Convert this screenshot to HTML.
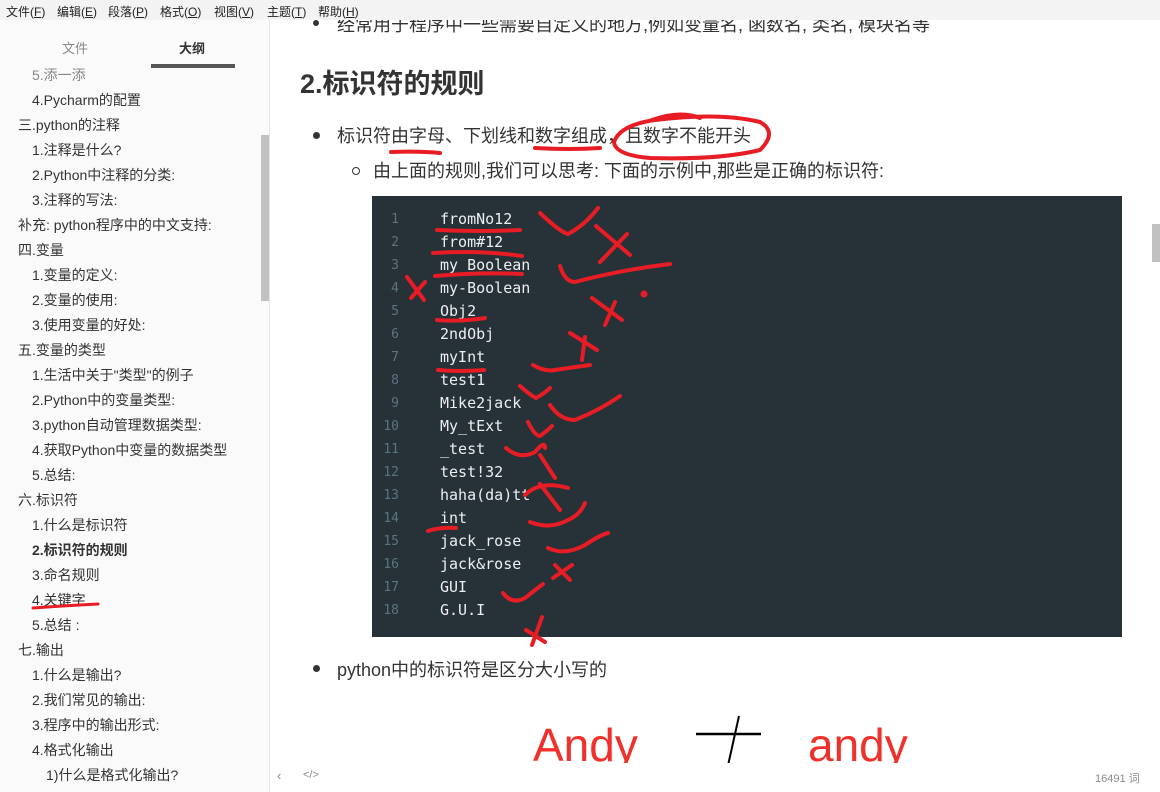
<!DOCTYPE html>
<html><head><meta charset="utf-8"><style>
*{margin:0;padding:0;box-sizing:border-box}
body{width:1160px;height:792px;overflow:hidden;background:#fff;font-family:"Liberation Sans","Noto Sans CJK SC",sans-serif;color:#333;position:relative}
.menu{position:absolute;left:0;top:0;width:1160px;height:20px;background:#f3f3f3;font-size:12px;color:#222}
.menu span{position:absolute;top:3px}
.side{position:absolute;left:0;top:20px;width:270px;height:772px;background:#fafafa;border-right:1px solid #e5e5e5;overflow:hidden}
.tab{position:absolute;top:18px;font-size:13px}
.side .it{position:absolute;font-size:14px;color:#333;white-space:nowrap}
.sb{position:absolute;left:261px;top:135px;width:8px;height:166px;background:#c1c1c1}
.main{position:absolute;left:271px;top:20px;width:889px;height:743px;overflow:hidden}
.code{position:absolute;left:101px;top:176px;width:750px;height:441px;background:#263238}
.ln{position:absolute;left:0;width:27px;text-align:right;color:#5c7480;font-family:"DejaVu Sans Mono","Liberation Mono",monospace;font-size:13px}
.cd{position:absolute;left:68px;color:#eceff1;font-family:"DejaVu Sans Mono","Liberation Mono",monospace;font-size:15px;white-space:pre}
.foot{position:absolute;left:271px;top:763px;width:889px;height:29px;background:#fff;font-size:11px;color:#888}
.t{position:absolute;font-size:18px;white-space:nowrap}
</style></head><body>
<div class="menu">
<span style="left:6px">文件(<u>F</u>)</span><span style="left:57px">编辑(<u>E</u>)</span><span style="left:108px">段落(<u>P</u>)</span><span style="left:160px">格式(<u>O</u>)</span><span style="left:214px">视图(<u>V</u>)</span><span style="left:267px">主题(<u>T</u>)</span><span style="left:318px">帮助(<u>H</u>)</span>
</div>
<div class="side">
<div class="it" style="left:32px;top:45px;color:#888">5.添一添</div>
<div class="tab" style="left:62px;color:#888;background:#fafafa">文件</div>
<div class="tab" style="left:179px;color:#333;font-weight:bold">大纲</div>
<div style="position:absolute;left:0;top:0;width:260px;height:44px;background:#fafafa;z-index:-1"></div>
<div style="position:absolute;left:151px;top:44px;width:84px;height:4px;background:#555"></div>
<div class="it" style="left:32px;top:70px">4.Pycharm的配置</div>
<div class="it" style="left:18px;top:95px">三.python的注释</div>
<div class="it" style="left:32px;top:120px">1.注释是什么?</div>
<div class="it" style="left:32px;top:145px">2.Python中注释的分类:</div>
<div class="it" style="left:32px;top:170px">3.注释的写法:</div>
<div class="it" style="left:18px;top:195px">补充: python程序中的中文支持:</div>
<div class="it" style="left:18px;top:220px">四.变量</div>
<div class="it" style="left:32px;top:245px">1.变量的定义:</div>
<div class="it" style="left:32px;top:270px">2.变量的使用:</div>
<div class="it" style="left:32px;top:295px">3.使用变量的好处:</div>
<div class="it" style="left:18px;top:320px">五.变量的类型</div>
<div class="it" style="left:32px;top:345px">1.生活中关于"类型"的例子</div>
<div class="it" style="left:32px;top:370px">2.Python中的变量类型:</div>
<div class="it" style="left:32px;top:395px">3.python自动管理数据类型:</div>
<div class="it" style="left:32px;top:420px">4.获取Python中变量的数据类型</div>
<div class="it" style="left:32px;top:445px">5.总结:</div>
<div class="it" style="left:18px;top:470px">六.标识符</div>
<div class="it" style="left:32px;top:495px">1.什么是标识符</div>
<div class="it" style="left:32px;top:520px;font-weight:bold">2.标识符的规则</div>
<div class="it" style="left:32px;top:545px">3.命名规则</div>
<div class="it" style="left:32px;top:570px">4.关键字</div>
<div class="it" style="left:32px;top:595px">5.总结 :</div>
<div class="it" style="left:18px;top:620px">七.输出</div>
<div class="it" style="left:32px;top:645px">1.什么是输出?</div>
<div class="it" style="left:32px;top:670px">2.我们常见的输出:</div>
<div class="it" style="left:32px;top:695px">3.程序中的输出形式:</div>
<div class="it" style="left:32px;top:720px">4.格式化输出</div>
<div class="it" style="left:46px;top:745px">1)什么是格式化输出?</div>
</div>
<div class="sb"></div>
<svg style="position:absolute;left:0;top:0" width="270" height="792"><path d="M33 608 Q60 606 98 604" stroke="#e81c24" stroke-width="3" fill="none" stroke-linecap="round"/></svg>
<div class="main">
<div style="position:absolute;left:42px;top:0px;width:6px;height:6px;border-radius:50%;background:#333"></div>
<div class="t" style="left:66px;top:-9px">经常用于程序中一些需要自定义的地方,例如变量名, 函数名, 类名, 模块名等</div>
<div style="position:absolute;left:29px;top:42px;font-size:27px;font-weight:bold;color:#333">2.标识符的规则</div>
<div style="position:absolute;left:42px;top:112px;width:7px;height:7px;border-radius:50%;background:#333"></div>
<div class="t" style="left:66px;top:102px">标识符由字母、下划线和数字组成，且数字不能开头</div>
<div style="position:absolute;left:81px;top:147px;width:8px;height:8px;border-radius:50%;border:1px solid #333"></div>
<div class="t" style="left:102px;top:137px">由上面的规则,我们可以思考: 下面的示例中,那些是正确的标识符:</div>
<div class="code">
<div class="ln" style="top:16px">1</div><div class="cd" style="top:14px">fromNo12</div>
<div class="ln" style="top:39px">2</div><div class="cd" style="top:37px">from#12</div>
<div class="ln" style="top:62px">3</div><div class="cd" style="top:60px">my_Boolean</div>
<div class="ln" style="top:85px">4</div><div class="cd" style="top:83px">my-Boolean</div>
<div class="ln" style="top:108px">5</div><div class="cd" style="top:106px">Obj2</div>
<div class="ln" style="top:131px">6</div><div class="cd" style="top:129px">2ndObj</div>
<div class="ln" style="top:154px">7</div><div class="cd" style="top:152px">myInt</div>
<div class="ln" style="top:177px">8</div><div class="cd" style="top:175px">test1</div>
<div class="ln" style="top:200px">9</div><div class="cd" style="top:198px">Mike2jack</div>
<div class="ln" style="top:223px">10</div><div class="cd" style="top:221px">My_tExt</div>
<div class="ln" style="top:246px">11</div><div class="cd" style="top:244px">_test</div>
<div class="ln" style="top:269px">12</div><div class="cd" style="top:267px">test!32</div>
<div class="ln" style="top:292px">13</div><div class="cd" style="top:290px">haha(da)tt</div>
<div class="ln" style="top:315px">14</div><div class="cd" style="top:313px">int</div>
<div class="ln" style="top:338px">15</div><div class="cd" style="top:336px">jack_rose</div>
<div class="ln" style="top:361px">16</div><div class="cd" style="top:359px">jack&amp;rose</div>
<div class="ln" style="top:384px">17</div><div class="cd" style="top:382px">GUI</div>
<div class="ln" style="top:407px">18</div><div class="cd" style="top:405px">G.U.I</div>
</div>
<div style="position:absolute;left:42px;top:645px;width:7px;height:7px;border-radius:50%;background:#333"></div>
<div class="t" style="left:66px;top:636px">python中的标识符是区分大小写的</div>
<div style="position:absolute;left:262px;top:700px;font-size:46px;color:#f0302a;line-height:50px">Andy</div>
<div style="position:absolute;left:537px;top:700px;font-size:46px;color:#f0302a;line-height:50px">andy</div>
<svg style="position:absolute;left:420px;top:690px" width="80" height="60"><path d="M5 24 H70" stroke="#000" stroke-width="2.5"/><path d="M48 6 L36 60" stroke="#000" stroke-width="2"/></svg>
</div>
<svg style="position:absolute;left:0;top:0" width="1160" height="792" fill="none" stroke="#e81c24" stroke-width="4" stroke-linecap="round" stroke-linejoin="round">
<path d="M437 230 Q480 232 520 230"/>
<path d="M433 253 Q480 250 522 256"/>
<path d="M435 276 Q480 272 522 274"/>
<path d="M437 320 Q460 322 485 318"/>
<path d="M438 370 Q460 372 484 370"/>
<path d="M428 531 Q440 527 456 528"/>
<path d="M407 277 L424 300 M411 298 L425 282"/>
<path d="M540 213 Q560 232 568 234 Q585 225 598 208"/>
<path d="M596 226 L630 255 M627 234 L600 262"/>
<path d="M560 266 Q565 282 575 282 Q620 270 670 264"/>
<circle cx="644" cy="294" r="1.5" fill="#e81c24"/>
<path d="M592 298 L622 320 M615 302 L605 325"/>
<path d="M570 333 L597 350 M585 337 L582 360"/>
<path d="M533 365 Q545 372 555 370 Q575 367 590 365"/>
<path d="M520 386 Q530 395 536 398 Q545 393 550 388"/>
<path d="M550 405 Q560 420 575 420 Q600 410 620 396"/>
<path d="M528 422 Q535 436 540 436 Q548 430 552 426"/>
<path d="M506 448 Q520 460 535 452 Q545 440 545 448 M540 455 L555 478"/>
<path d="M525 495 Q540 480 568 488 M540 484 L560 510"/>
<path d="M530 522 Q550 530 568 520 Q580 515 585 503"/>
<path d="M548 548 Q565 556 585 545 Q600 535 608 533"/>
<path d="M553 578 L572 565 M555 565 L570 580"/>
<path d="M503 593 Q512 605 525 598 Q535 590 543 584"/>
<path d="M526 630 L545 642 M542 617 L532 645"/>
<path d="M614 142 Q620 125 655 120 Q720 112 760 122 Q778 132 760 150 Q720 160 650 158 Q615 155 614 142"/>
<path d="M652 120 Q680 110 700 118"/>
<path d="M391 152 Q420 151 440 153"/>
<path d="M535 148 Q570 150 600 148"/>
</svg>
<div style="position:absolute;left:1152px;top:224px;width:8px;height:38px;background:#c1c1c1"></div>
<div class="foot">
<span style="position:absolute;left:6px;top:5px;font-size:13px">&lsaquo;</span>
<span style="position:absolute;left:32px;top:6px">&lt;/&gt;</span>
<span style="position:absolute;left:824px;top:7px">16491 词</span>
</div>
</body></html>
